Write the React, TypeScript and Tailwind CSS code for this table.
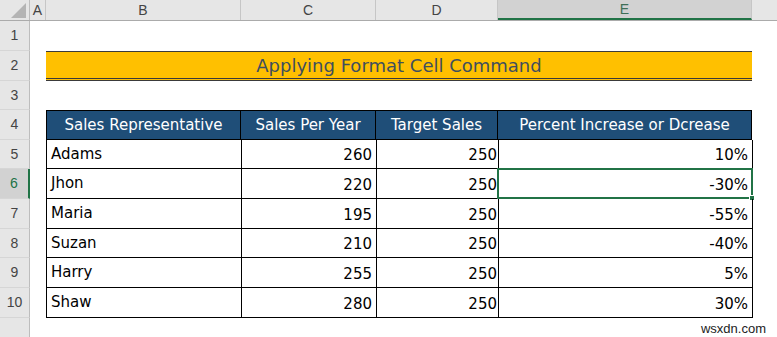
const font = "font-['Comic_Sans_MS','DejaVu_Sans',sans-serif]"

const rows = [
  { name: 'Adams', sales: 260, target: 250, pct: '10%' },
  { name: 'Jhon', sales: 220, target: 250, pct: '-30%', selected: true },
  { name: 'Maria', sales: 195, target: 250, pct: '-55%' },
  { name: 'Suzan', sales: 210, target: 250, pct: '-40%' },
  { name: 'Harry', sales: 255, target: 250, pct: '5%' },
  { name: 'Shaw', sales: 280, target: 250, pct: '30%' },
]

const heights = ['h-[29px]', 'h-[30px]', 'h-[30px]', 'h-[29px]', 'h-[30px]', 'h-[30px]']

function RowHead({ n, active, h }: { n: number | string; active?: boolean; h: string }) {
  return (
    <div
      className={`${h} w-[30px] shrink-0 flex items-center justify-center text-[14px] font-['Liberation_Sans',sans-serif] border-b border-[#d6d6d6] ${
        active
          ? 'bg-[#d2d2d2] text-[#217346] border-r-2 border-r-[#217346]'
          : 'bg-[#e6e6e6] text-[#444] border-r border-r-[#bdbdbd]'
      }`}
    >
      {n}
    </div>
  )
}

function ColHead({ label, w, active }: { label: string; w: string; active?: boolean }) {
  return (
    <div
      className={`${w} shrink-0 h-full flex items-center justify-center border-r border-[#c6c6c6] ${
        active ? 'bg-[#d2d2d2] text-[#3f6f57] border-b-2 border-b-[#217346]' : ''
      }`}
    >
      {label}
    </div>
  )
}

export default function App() {
  return (
    <div className="w-[777px] h-[337px] bg-white overflow-hidden relative">
      {/* column headings */}
      <div className="flex h-[21px] bg-[#e6e6e6] border-b border-[#ababab] text-[14px] text-[#444] font-['Liberation_Sans',sans-serif]">
        <div className="w-[30px] shrink-0 h-full border-r border-[#bdbdbd] flex items-end justify-end pr-[3px] pb-[2px]">
          <svg width="15" height="15" viewBox="0 0 15 15">
            <polygon points="15,0 15,15 0,15" fill="#b4b4b4" />
          </svg>
        </div>
        <ColHead label="A" w="w-[16px]" />
        <ColHead label="B" w="w-[195px]" />
        <ColHead label="C" w="w-[135px]" />
        <ColHead label="D" w="w-[122px]" />
        <ColHead label="E" w="w-[254px]" active />
        <div className="flex-1" />
      </div>

      {/* row 1 */}
      <div className="flex">
        <RowHead n={1} h="h-[30px]" />
      </div>

      {/* row 2: title */}
      <div className="flex">
        <RowHead n={2} h="h-[30px]" />
        <div className="w-[16px]" />
        <div
          className={`w-[706px] h-[30px] bg-[#ffc000] border-t border-[#3a3a3a] border-b-[3px] border-double border-b-[#3a3a3a] flex items-center justify-center text-[18px] text-[#3f4f5e] ${font}`}
        >
          Applying Format Cell Command
        </div>
      </div>

      {/* row 3 */}
      <div className="flex">
        <RowHead n={3} h="h-[29px]" />
      </div>

      {/* row 4: table header */}
      <div className="flex">
        <RowHead n={4} h="h-[30px]" />
        <div className="w-[16px]" />
        <div className={`flex h-[30px] bg-[#1f4e78] text-white text-[15px] border border-black ${font}`}>
          <div className="w-[194px] flex items-center justify-center border-r border-black">Sales Representative</div>
          <div className="w-[135px] flex items-center justify-center border-r border-black">Sales Per Year</div>
          <div className="w-[122px] flex items-center justify-center border-r border-black">Target Sales</div>
          <div className="w-[253px] flex items-center justify-center">Percent Increase or Dcrease</div>
        </div>
      </div>

      {/* data rows */}
      {rows.map((r, i) => (
        <div key={r.name} className="flex">
          <RowHead n={i + 5} h={heights[i]} active={r.selected} />
          <div className="w-[16px]" />
          <div className={`flex ${heights[i]} text-[15px] text-black ${font}`}>
            <div className="w-[196px] border-l border-r border-b border-black px-[4px] pt-[3px]">{r.name}</div>
            <div className="w-[135px] border-r border-b border-black flex items-end justify-end pr-[4px] pb-[2px]">
              {r.sales}
            </div>
            <div className="w-[122px] border-r border-b border-black flex items-end justify-end pr-[1px] pb-[2px]">
              {r.target}
            </div>
            <div className="w-[254px] border-r border-b border-black flex items-end justify-end pr-[4px] pb-[2px] relative">
              {r.pct}
              {r.selected && (
                <div className="absolute -left-[2px] -top-[1px] -right-[1px] -bottom-[1px] border-2 border-[#217346]">
                  <div className="absolute -right-[4px] -bottom-[4px] w-[6px] h-[6px] bg-[#217346] border border-white" />
                </div>
              )}
            </div>
          </div>
        </div>
      ))}

      {/* row 11 */}
      <div className="flex">
        <RowHead n="" h="h-[30px]" />
        <div className="flex-1 flex justify-end pr-[11px] pt-[3px]">
          <span className="text-[13px] leading-[15px] text-[#222] font-['Liberation_Sans',sans-serif]">wsxdn.com</span>
        </div>
      </div>
    </div>
  )
}
